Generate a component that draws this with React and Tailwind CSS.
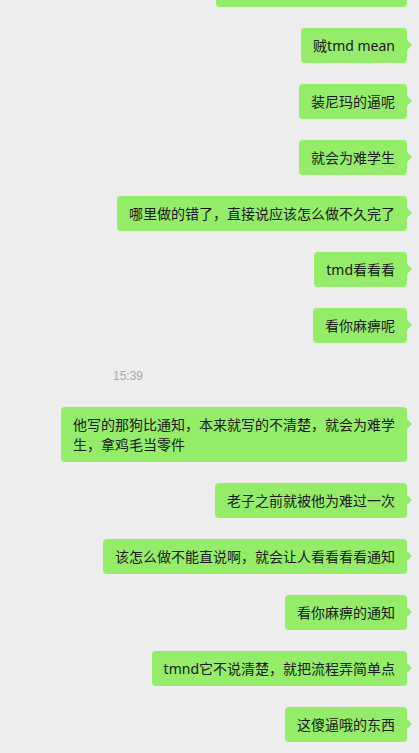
import React from 'react';

const messages = [
    '贼tmd mean',
    '装尼玛的逼呢',
    '就会为难学生',
    '哪里做的错了，直接说应该怎么做不久完了',
    'tmd看看看',
    '看你麻痹呢',
];

const laterMessages = [
    '他写的那狗比通知，本来就写的不清楚，就会为难学生，拿鸡毛当零件',
    '老子之前就被他为难过一次',
    '该怎么做不能直说啊，就会让人看看看看通知',
    '看你麻痹的通知',
    'tmnd它不说清楚，就把流程弄简单点',
    '这傻逼哦的东西',
];

const Bubble = ({ text, className = '' }) => (
    <div className={`relative mt-[21px] max-w-[346px] rounded-[4px] bg-[#95ec69] px-3 py-[7.5px] text-[14px] leading-[20px] text-[#191919] ${className}`}>
        {text}
        <span className="absolute -right-[5px] top-[12px] h-0 w-0 border-y-[5px] border-l-[5px] border-y-transparent border-l-[#95ec69]" />
    </div>
);

const App = () => {
    return (
        <div
            className="h-[753px] w-[419px] overflow-hidden bg-[#ededed]"
            style={{ fontFamily: '"Noto Sans", "Noto Sans CJK SC", sans-serif' }}
        >
            <div className="flex flex-col items-end pr-3">
                {/* previous message, mostly scrolled off */}
                <div className="relative -mt-[28px] h-[35px] w-[191px] rounded-[4px] bg-[#95ec69]" />
                {messages.map((m, i) => (
                    <Bubble key={i} text={m} />
                ))}
                <div className="mt-[23px] self-start pl-[113px] text-[12px] leading-[20px] text-[#a8a8a8]" style={{ fontFamily: '"Liberation Sans", sans-serif' }}>
                    15:39
                </div>
                {laterMessages.map((m, i) => (
                    <Bubble key={i} text={m} className={i === 0 ? 'mt-[18px]' : ''} />
                ))}
            </div>
        </div>
    );
};

export default App;
